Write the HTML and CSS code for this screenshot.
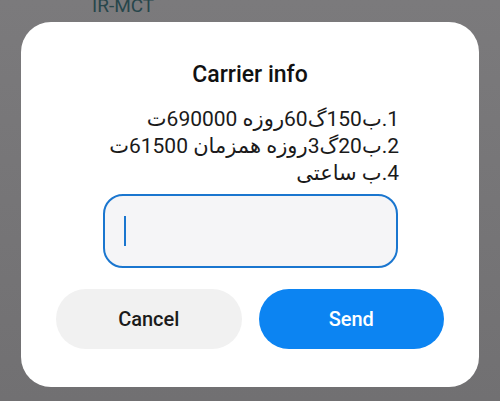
FILE: index.html
```html
<!DOCTYPE html>
<html lang="en">
<head>
    <meta charset="UTF-8">
    <meta name="viewport" content="width=device-width, initial-scale=1.0">
    <title>Carrier info</title>
    <link rel="stylesheet" href="styles.css">
</head>
<body>

<!-- Page behind the dialog -->
<div class="page-label">IR-MCT</div>

<!-- Carrier info dialog -->
<div class="dialog">
    <h2 class="dialog-title">Carrier info</h2>

    <!-- USSD reply from the carrier -->
    <div class="dialog-message" dir="rtl" lang="fa">
        <p>1.ب150گ60روزه 690000ت</p>
        <p>2.ب20گ3روزه همزمان 61500ت</p>
        <p>4.ب ساعتی</p>
    </div>

    <div class="dialog-input">
        <span class="caret"></span>
    </div>

    <div class="dialog-buttons">
        <button class="btn btn-cancel">Cancel</button>
        <button class="btn btn-send">Send</button>
    </div>
</div>

</body>
</html>
```

FILE: styles.css
```css
/* General Body Styling */
body {
    font-family: Roboto, "DejaVu Sans", sans-serif;
    margin: 0;
    padding: 0;
    width: 500px;
    height: 401px;
    overflow: hidden;
    background: linear-gradient(to bottom, #7b7a7c, #717072); /* dimmed screen */
}

/* Text of the screen behind the scrim */
.page-label {
    height: 12px;
    padding-left: 92px;
    font-size: 19px;
    line-height: 12px;
    color: #27464b;
    overflow: hidden;
}

/* Dialog card */
.dialog {
    margin: 10px 21px 0;
    height: 365px;
    box-sizing: border-box;
    padding-top: 39px;
    background: #ffffff;
    border-radius: 30px;
}

.dialog-title {
    margin: 0;
    font-size: 23px;
    font-weight: 500;
    line-height: 28px;
    text-align: center;
    color: #111111;
}

.dialog-message {
    margin: 17px 80px 0 80px;
    font-size: 21px;
    line-height: 27px;
    color: #1a1a1a;
    text-align: right;
}

.dialog-message p {
    margin: 0;
}

/* Text field */
.dialog-input {
    margin: 7px 81px 0 82px;
    height: 74px;
    box-sizing: border-box;
    border: 2.5px solid #1a76cf;
    border-radius: 20px;
    background: #f5f5f7;
    display: flex;
    align-items: center;
    padding-left: 19px;
}

.caret {
    width: 2px;
    height: 30px;
    background: #1a76cf;
}

/* Buttons row */
.dialog-buttons {
    display: flex;
    gap: 17px;
    margin: 21px 35px 0;
}

.btn {
    flex: 1;
    height: 60px;
    border: none;
    border-radius: 30px;
    font-family: Roboto, sans-serif;
    font-size: 20px;
    font-weight: 500;
}

.btn-cancel {
    background: #f1f1f1;
    color: #1b1b1b;
}

.btn-send {
    background: #0c84f2;
    color: #ffffff;
}
```
